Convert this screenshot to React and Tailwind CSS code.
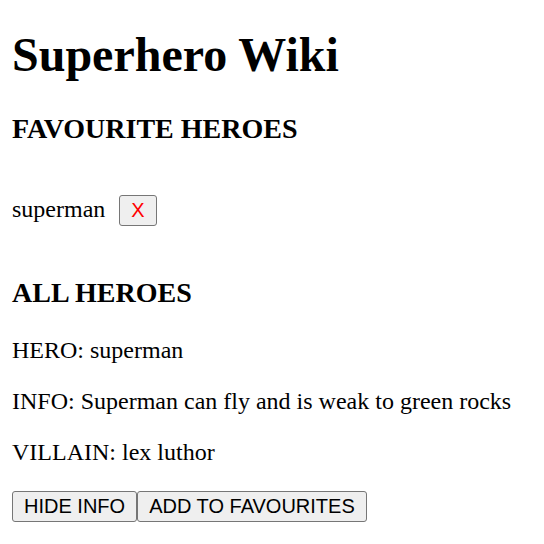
const btn =
  "inline-block border-[1.5px] border-[#767676] bg-[#efefef] rounded-[3px] px-[11px] py-[3px] text-[20px] leading-[normal] font-['Liberation_Sans',Arial,sans-serif]";

const App = () => {
  return (
    <div className="min-h-[544px] bg-white px-[12px] pt-[27px] font-['Liberation_Serif','Times_New_Roman',serif] text-black">
      <h1 className="text-[48px] font-bold leading-[normal]">Superhero Wiki</h1>
      <h3 className="mt-[31px] text-[28px] font-bold leading-[normal]">FAVOURITE HEROES</h3>
      <div className="mt-[50px] text-[24px] leading-[normal]">
        superman <button className={`${btn} ml-[8px] text-[#ff0000]`}>X</button>
      </div>
      <h3 className="mt-[51px] text-[28px] font-bold leading-[normal]">ALL HEROES</h3>
      <p className="mt-[28px] text-[24px] leading-[normal]">HERO: superman</p>
      <p className="mt-[24px] text-[24px] leading-[normal]">
        INFO: Superman can fly and is weak to green rocks
      </p>
      <p className="mt-[24px] text-[24px] leading-[normal]">VILLAIN: lex luthor</p>
      <div className="mt-[25px] flex">
        <button className={`${btn} text-black`}>HIDE INFO</button>
        <button className={`${btn} text-black`}>ADD TO FAVOURITES</button>
      </div>
    </div>
  );
};

export default App;
